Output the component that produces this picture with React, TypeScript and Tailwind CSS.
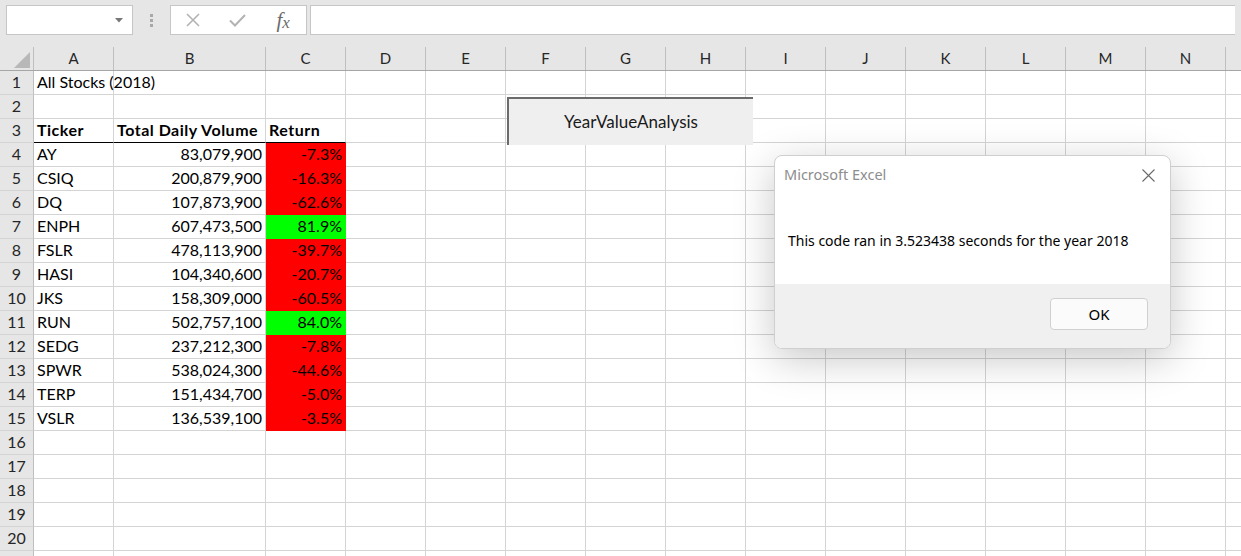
import React from "react";

const COLS = ["A", "B", "C", "D", "E", "F", "G", "H", "I", "J", "K", "L", "M", "N", ""];
const WIDTHS = ["w-[80px]", "w-[152px]", "w-[80px]", "w-[80px]", "w-[80px]", "w-[80px]", "w-[80px]", "w-[80px]", "w-[80px]", "w-[80px]", "w-[80px]", "w-[80px]", "w-[80px]", "w-[80px]", "w-[80px]"];

type Stock = { t: string; v: string; r: string; up: boolean };

const STOCKS: Stock[] = [
  { t: "AY", v: "83,079,900", r: "-7.3%", up: false },
  { t: "CSIQ", v: "200,879,900", r: "-16.3%", up: false },
  { t: "DQ", v: "107,873,900", r: "-62.6%", up: false },
  { t: "ENPH", v: "607,473,500", r: "81.9%", up: true },
  { t: "FSLR", v: "478,113,900", r: "-39.7%", up: false },
  { t: "HASI", v: "104,340,600", r: "-20.7%", up: false },
  { t: "JKS", v: "158,309,000", r: "-60.5%", up: false },
  { t: "RUN", v: "502,757,100", r: "84.0%", up: true },
  { t: "SEDG", v: "237,212,300", r: "-7.8%", up: false },
  { t: "SPWR", v: "538,024,300", r: "-44.6%", up: false },
  { t: "TERP", v: "151,434,700", r: "-5.0%", up: false },
  { t: "VSLR", v: "136,539,100", r: "-3.5%", up: false },
];

type Cell = { text?: string; align?: "left" | "right"; bold?: boolean; fill?: "red" | "green"; under?: boolean };

function rowCells(r: number): Cell[] {
  if (r === 1) return [{ text: "All Stocks (2018)" }];
  if (r === 3)
    return [
      { text: "Ticker", bold: true, under: true },
      { text: "Total Daily Volume", bold: true, under: true },
      { text: "Return", bold: true, under: true },
    ];
  const s = STOCKS[r - 4];
  if (s)
    return [
      { text: s.t },
      { text: s.v, align: "right" },
      { text: s.r, align: "right", fill: s.up ? "green" : "red" },
    ];
  return [];
}

function GridCell({ cell, w }: { cell?: Cell; w: string }) {
  const fill =
    cell?.fill === "red"
      ? "bg-[#ff0000] border-r-[#ff0000] border-b-[#ff0000]"
      : cell?.fill === "green"
      ? "bg-[#00ff00] border-r-[#00ff00] border-b-[#00ff00]"
      : "border-r-[#d4d4d4] border-b-[#d4d4d4]";
  return (
    <div
      className={`${w} shrink-0 h-full border-r border-b ${fill} ${cell?.under ? "border-b-black!" : ""} flex items-end px-[3px] whitespace-nowrap overflow-visible ${
        cell?.align === "right" ? "justify-end" : "justify-start"
      } ${cell?.bold ? "font-bold tracking-[0.5px]" : ""}`}
    >
      {cell?.text}
    </div>
  );
}

function Toolbar() {
  return (
    <div className="h-[47px] flex items-start pt-[5px] px-[6px] gap-0">
      <div className="w-[127px] h-[30px] bg-white border border-[#c6c6c6] flex items-center justify-end pr-[9px]">
        <svg width="8" height="5" viewBox="0 0 8 5"><path d="M0 0h8L4 4.5z" fill="#777" /></svg>
      </div>
      <div className="w-[37px] h-[30px] flex flex-col items-center justify-center gap-[2px]">
        <span className="w-[3px] h-[3px] bg-[#a8a8a8]" />
        <span className="w-[3px] h-[3px] bg-[#a8a8a8]" />
        <span className="w-[3px] h-[3px] bg-[#a8a8a8]" />
      </div>
      <div className="w-[137px] h-[30px] bg-white border border-[#c6c6c6] flex items-center">
        <div className="w-[44px] flex justify-center">
          <svg width="14" height="14" viewBox="0 0 14 14"><path d="M1 1l12 12M13 1L1 13" stroke="#b3b3b3" strokeWidth="1.6" /></svg>
        </div>
        <div className="w-[46px] flex justify-center">
          <svg width="17" height="13" viewBox="0 0 17 13"><path d="M1 6.5l5 5L16 1" stroke="#b3b3b3" strokeWidth="2" fill="none" /></svg>
        </div>
        <div className="w-[46px] flex justify-center items-end text-[#6b6b6b] italic leading-none font-['Liberation_Serif',serif]">
          <span className="text-[21px]">f</span><span className="text-[17px]">x</span>
        </div>
      </div>
      <div className="ml-[3px] flex-1 h-[30px] bg-white border border-[#c6c6c6] border-r-0" />
    </div>
  );
}

export default function App() {
  const rows = Array.from({ length: 21 }, (_, i) => i + 1);
  return (
    <div className="relative w-[1241px] h-[556px] overflow-hidden bg-[#e6e6e6] font-['Lato','Liberation_Sans',sans-serif] text-[16px] text-black">
      <Toolbar />
      {/* column headers */}
      <div className="flex h-[24px] border-b border-[#a6a6a6] text-[15px]">
        <div className="w-[34px] shrink-0 border-r border-[#bfbfbf] flex items-end justify-end pr-[3px] pb-[2px]">
          <svg width="16" height="16" viewBox="0 0 16 16"><path d="M16 0V16H0z" fill="#b8b8b8" /></svg>
        </div>
        {COLS.map((c, i) => (
          <div key={i} className={`${WIDTHS[i]} shrink-0 border-r border-[#bfbfbf] flex items-center justify-center text-[#262626]`}>
            {c}
          </div>
        ))}
      </div>
      {/* rows */}
      {rows.map((r) => {
        const cells = rowCells(r);
        return (
          <div key={r} className="flex h-[24px]">
            <div className="w-[34px] shrink-0 border-r border-r-[#bfbfbf] border-b border-b-[#d4d4d4] flex items-end justify-center text-[#262626] text-[16px]">
              {r <= 20 ? r : ""}
            </div>
            <div className="flex bg-white">
              {COLS.map((_, i) => (
                <GridCell key={i} cell={cells[i]} w={WIDTHS[i]} />
              ))}
            </div>
          </div>
        );
      })}

      {/* form button */}
      <div className="absolute left-[507px] top-[97px] w-[246px] h-[48px] bg-[#efefef] border-l-2 border-t-2 border-[#6b6b6b] flex items-center justify-center text-[17px] text-[#1a1a1a]">
        YearValueAnalysis
      </div>

      {/* message box */}
      <div className="absolute left-[774px] top-[155px] w-[397px] h-[194px] rounded-[8px] border border-[#cfcfcf] bg-white overflow-hidden shadow-[0_10px_40px_rgba(0,0,0,0.22)] flex flex-col font-['Noto_Sans','Open_Sans',sans-serif]">
        <div className="h-[128px] flex flex-col">
          <div className="h-[38px] flex items-center justify-between pl-[9px] pr-[15px]">
            <span className="text-[14.5px] text-[#8d8d8d]">Microsoft Excel</span>
            <svg width="13" height="13" viewBox="0 0 13 13"><path d="M0.5 0.5l12 12M12.5 0.5l-12 12" stroke="#6a6a6a" strokeWidth="1.1" /></svg>
          </div>
          <div className="flex-1 flex items-center pl-[13px] pt-[2px] text-[14px] text-black">
            This code ran in 3.523438 seconds for the year 2018
          </div>
        </div>
        <div className="flex-1 bg-[#f0f0f0] flex justify-end items-start pt-[14px] pr-[22px]">
          <div className="w-[98px] h-[32px] rounded-[4px] border border-[#d0d0d0] bg-[#fbfbfb] flex items-center justify-center text-[15px] text-black">
            OK
          </div>
        </div>
      </div>
    </div>
  );
}
